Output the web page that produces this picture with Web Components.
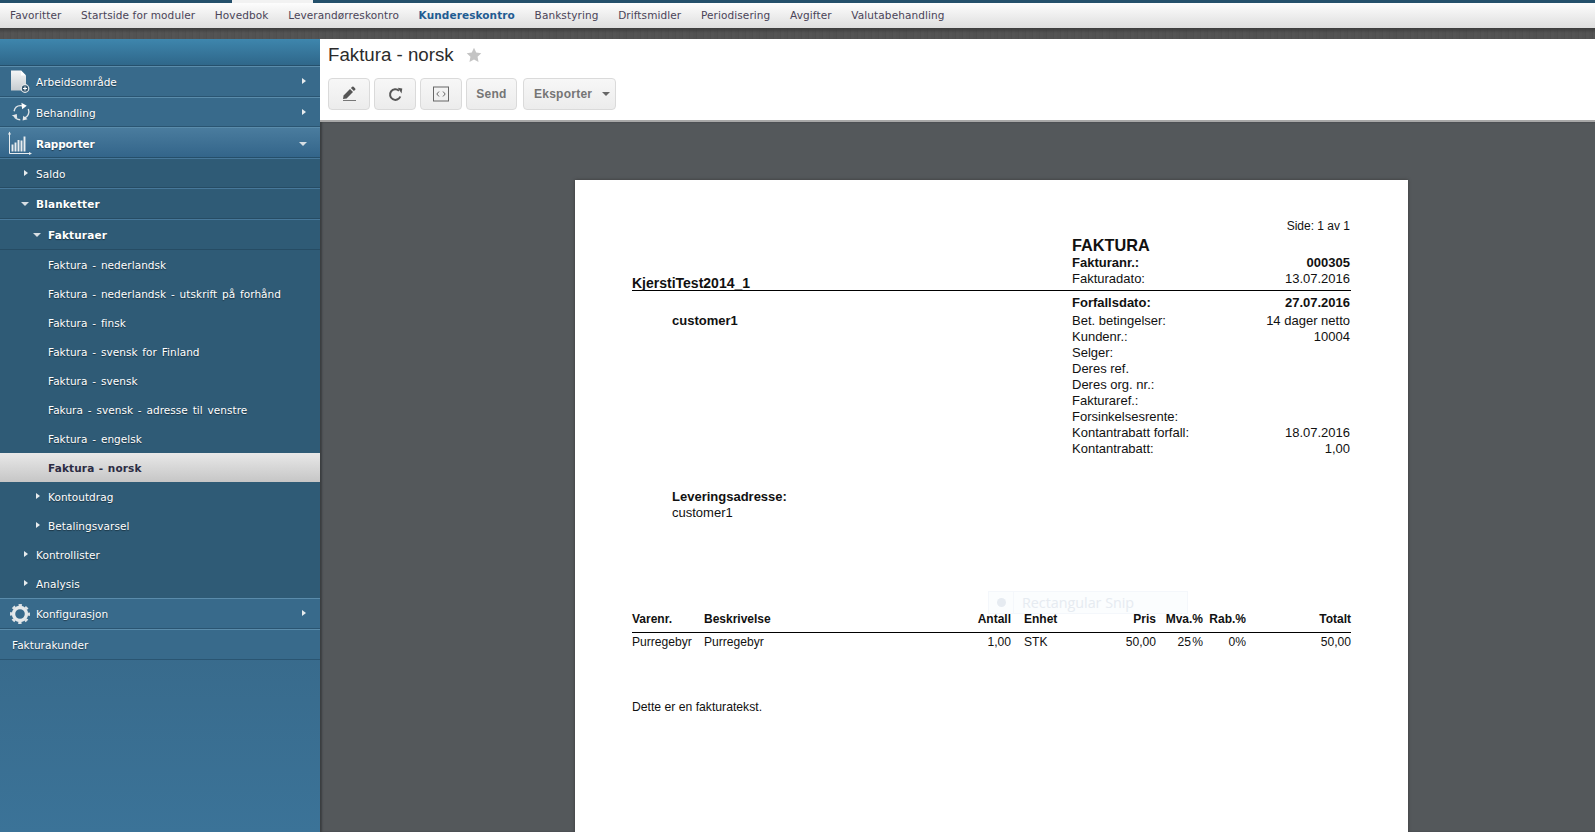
<!DOCTYPE html>
<html lang="no"><head><meta charset="utf-8"><title>Faktura - norsk</title>
<style>
html,body{margin:0;padding:0;height:100%;overflow:hidden;background:#54585b}
app-shell{font-family:"DejaVu Sans",sans-serif}
</style></head><body>
<app-shell>
  <top-menu slot="top">
    <menu-link>Favoritter</menu-link><menu-link>Startside for moduler</menu-link><menu-link>Hovedbok</menu-link><menu-link>Leverandørreskontro</menu-link><menu-link active>Kundereskontro</menu-link><menu-link>Bankstyring</menu-link><menu-link>Driftsmidler</menu-link><menu-link>Periodisering</menu-link><menu-link>Avgifter</menu-link><menu-link>Valutabehandling</menu-link>
  </top-menu>
  <side-nav slot="side">
    <nav-row kind="top" h="31" icon="doc" arrow="far-right" x="36">Arbeidsområde</nav-row>
    <nav-row kind="top" h="30" icon="cycle" arrow="far-right" x="36" dy="1">Behandling</nav-row>
    <nav-row kind="open" h="31" icon="chart" arrow="far-down" x="36" bold dy="1" style="--ls:-.15px">Rapporter</nav-row>
    <nav-row kind="sub" h="30" arrow="right" x="36" dy="1">Saldo</nav-row>
    <nav-row kind="sub" h="31" arrow="down" x="36" bold>Blanketter</nav-row>
    <nav-row kind="sub" h="31" arrow="down" x="48" bold>Fakturaer</nav-row>
    <nav-row kind="item" h="29" x="48">Faktura - nederlandsk</nav-row>
    <nav-row kind="item" h="29" x="48">Faktura - nederlandsk - utskrift på forhånd</nav-row>
    <nav-row kind="item" h="29" x="48">Faktura - finsk</nav-row>
    <nav-row kind="item" h="29" x="48">Faktura - svensk for Finland</nav-row>
    <nav-row kind="item" h="29" x="48">Faktura - svensk</nav-row>
    <nav-row kind="item" h="29" x="48">Fakura - svensk - adresse til venstre</nav-row>
    <nav-row kind="item" h="29" x="48">Faktura - engelsk</nav-row>
    <nav-row kind="active" h="29" x="48" bold>Faktura - norsk</nav-row>
    <nav-row kind="item" h="29" arrow="right" x="48">Kontoutdrag</nav-row>
    <nav-row kind="item" h="29" arrow="right" x="48">Betalingsvarsel</nav-row>
    <nav-row kind="item" h="29" arrow="right" x="36">Kontrollister</nav-row>
    <nav-row kind="item" h="29" arrow="right" x="36">Analysis</nav-row>
    <nav-row kind="top" h="31" icon="gear" arrow="far-right" x="36">Konfigurasjon</nav-row>
    <nav-row kind="top" h="31" x="12">Fakturakunder</nav-row>
  </side-nav>
  <tool-bar slot="tools" heading="Faktura - norsk">
    <tool-btn w="42" icon="pencil"></tool-btn>
    <tool-btn w="42" icon="refresh"></tool-btn>
    <tool-btn w="42" icon="code"></tool-btn>
    <tool-btn w="51">Send</tool-btn>
    <tool-btn w="93" caret style="margin-left:2px">Eksporter</tool-btn>
  </tool-bar>
  <report-page slot="main"></report-page>
</app-shell>
<script>
const svg = {
 doc:`<svg width="26" height="26" viewBox="0 0 26 26"><defs><linearGradient id="dg" x1="0" y1="0" x2="0" y2="1"><stop offset="0" stop-color="#f4f6f7"/><stop offset="1" stop-color="#c6ccd0"/></linearGradient></defs><path d="M3 1.500h10l5 5v15H3z" fill="url(#dg)"/><path d="M13 1.500l5 5h-5z" fill="#fff"/><circle cx="17" cy="19.500" r="3.800" fill="#33566e" stroke="#e6e9eb" stroke-width="1.200"/><path d="M15 19.500h4M17 17.500v4" stroke="#fff" stroke-width="1.100"/></svg>`,
 cycle:`<svg width="26" height="26" viewBox="0 0 26 26" fill="none" stroke="#dfe5e8" stroke-width="1.800"><g transform="translate(3 3) scale(.77)"><path d="M4 12C5 7 9 4 15 5"/><path d="M13.500 1l7 4-6 4.500z" fill="#fff" stroke="none"/><path d="M22.500 9c2 5-.5 10-5 12"/><path d="M21.500 22.500l-6.500 1.500 1-6z" fill="#e6e9eb" stroke="none"/><path d="M12 23C8 23 5 21 4 17"/><path d="M1 17.500l6.500-2 .5 5.500z" fill="#e6e9eb" stroke="none"/></g></svg>`,
 chart:`<svg width="24" height="26" viewBox="0 0 24 26" fill="none" stroke="#e8edf0"><path d="M1.500 2.500v21H23" stroke-width="1"/><path d="M0 4.500l1.500-3 1.500 3zM21 22l3 1.500-3 1.500z" fill="#e8edf0" stroke="none"/><path d="M4.500 21.500v-7M7.500 21.500v-9M10.500 21.500v-11.500M13.500 21.500v-11M16.500 21.500v-15" stroke-width="1.900"/></svg>`,
 gear:`<svg width="26" height="26" viewBox="0 0 26 26" fill="none"><circle cx="12" cy="13" r="6.500" stroke="#e4e8ea" stroke-width="3.400"/><circle cx="12" cy="13" r="8.800" stroke="#dfe3e6" stroke-width="2.400" stroke-dasharray="3.400 3.510" stroke-dashoffset="1.700"/></svg>`,
 pencil:`<svg width="16" height="16" viewBox="0 0 16 16"><path d="M2 13l.6-3.600L9 3l3 3-6.400 6.400z" fill="#555"/><path d="M9.900 2.100l1.300-1.300a1 1 0 011.400 0l1.600 1.600a1 1 0 010 1.400l-1.300 1.300z" fill="#555"/><path d="M2 14.500h13" stroke="#777" stroke-width="1"/></svg>`,
 refresh:`<svg width="15" height="15" viewBox="0 0 15 15" fill="none"><path d="M12.300 9.500A5.300 5.300 0 1111 3.700" stroke="#555" stroke-width="2"/><path d="M9.500 1h4.500v5z" fill="#555" transform="rotate(8 11 3)"/></svg>`,
 code:`<svg width="16" height="16" viewBox="0 0 16 16" fill="none" stroke="#666"><rect x=".5" y="1" width="15" height="14" stroke-width="1"/><path d="M6 5.500L3.800 8l2.200 2.500M10 5.500L12.200 8 10 10.500" stroke-width="1"/></svg>`
};
function def(name, html, extra){
  const t=document.createElement('template'); t.innerHTML=html;
  customElements.define(name, class extends HTMLElement{
    constructor(){super();this.attachShadow({mode:'open'}).appendChild(t.content.cloneNode(true));}
    connectedCallback(){extra&&extra.call(this,this.shadowRoot)}
  });
}
def('app-shell',`<style>
:host{display:grid;grid-template-columns:320px 1fr;grid-template-rows:28px 11px auto 1fr;width:1595px;height:832px;overflow:hidden;background:#54585b}
.top{grid-column:1/3}
.tex{grid-column:1/3;background:linear-gradient(#3c3c3c,rgba(76,76,76,0) 5px),repeating-linear-gradient(90deg,#525252 0 3px,#4f4f4f 3px 4px,#545454 4px 7px)}
.side{grid-row:3/5;grid-column:1;min-height:0}
.tools{grid-row:3;grid-column:2;position:relative;z-index:1}
.main{grid-row:4;grid-column:2;min-height:0;overflow:hidden}
</style>
<div class="top"><slot name="top"></slot></div><div class="tex"></div>
<div class="side"><slot name="side"></slot></div><div class="tools"><slot name="tools"></slot></div><div class="main"><slot name="main"></slot></div>`);
def('top-menu',`<style>
:host{display:block;height:28px}
.strip{height:3px;background:linear-gradient(90deg,#24506b 0 232px,#f2f2f2 232px 313px,#24506b 313px)}
.bar{height:25px;background:linear-gradient(#fdfdfd,#dedede);display:flex;align-items:center;padding:0 0 2px 10px;gap:19.700px;box-sizing:border-box}
</style><div class="strip"></div><div class="bar"><slot></slot></div>`);
def('menu-link',`<style>
:host{display:block;font:10.5px/14px "DejaVu Sans",sans-serif;color:#4a4458;white-space:nowrap;letter-spacing:.1px}
:host([active]){color:#1f5c92;font-weight:700}
</style><slot></slot>`);
def('side-nav',`<style>
:host{display:block;height:100%;background:linear-gradient(#386a8b 600px,#3b7398);position:relative}
.head{height:27px;box-sizing:border-box;background:linear-gradient(#3e86ad,#2f678a);border-bottom:1px solid #25506c}
</style><div class="head"></div><slot></slot>`);
def('nav-row',`<style>
:host{display:block}
.r{position:relative;display:flex;align-items:center;box-sizing:border-box;height:100%;color:#fff;font:10.5px/14px "DejaVu Sans",sans-serif;letter-spacing:.05px;word-spacing:1.4px;text-shadow:0 1px 1px rgba(0,0,0,.45);white-space:nowrap}
.r.top{background:#386a8b;border-top:1px solid #5a8cab;border-bottom:1px solid #2a5572}
.r.open{background:linear-gradient(#4a7c9e,#33658a);border-top:1px solid #5a8cab;border-bottom:1px solid #254f6a}
.r.sub{background:#2f5b76;border-top:1px solid #47789a;border-bottom:1px solid #264c64}
.r.item{background:#2f5b76}
.r.active{background:linear-gradient(#e8e8e8,#c6c6c6);color:#2c2c44;text-shadow:none}
.ico{position:absolute;left:8px;top:50%;transform:translateY(-50%);display:flex}
.a{position:absolute;width:0;height:0;top:50%}
.right{border-left:4px solid #e8ecee;border-top:3.500px solid transparent;border-bottom:3.500px solid transparent;margin-top:-4px}
.down{border-top:4px solid #d8dfe4;border-left:4px solid transparent;border-right:4px solid transparent;margin-top:-2px}
</style><div class="r"><span class="ico"></span><i class="a"></i><span class="t"><slot></slot></span></div>`,
function(s){
  const r=s.querySelector('.r'),k=this.getAttribute('kind'),x=+this.getAttribute('x'),a=this.getAttribute('arrow');
  const dy=+(this.getAttribute('dy')||0);
  this.style.height=this.getAttribute('h')+'px';
  r.classList.add(k); r.style.paddingLeft=x+'px';
  if(dy) s.querySelector('.t').style.paddingTop=(2*dy)+'px';
  if(this.hasAttribute('bold')){r.style.fontWeight='700';r.style.letterSpacing='var(--ls,.15px)';r.style.wordSpacing='.6px'}
  const ic=this.getAttribute('icon'); s.querySelector('.ico').innerHTML=ic?svg[ic]:'';
  const i=s.querySelector('.a');
  if(!a) i.remove(); else {
    if(dy) i.style.top='calc(50% + '+dy+'px)';
    if(a==='far-right'){i.classList.add('right');i.style.left='302px'}
    if(a==='far-down'){i.classList.add('down');i.style.left='299px'}
    if(a==='right'){i.classList.add('right');i.style.left=(x-12)+'px'}
    if(a==='down'){i.classList.add('down');i.style.left=(x-15)+'px'}
  }
});
def('tool-bar',`<style>
:host{display:block;background:#fff;height:83px;box-sizing:border-box;border-bottom:2px solid #a8a8a8;padding:0 0 0 8px}
.h{height:32px;margin-bottom:7px;display:flex;align-items:center;gap:12px;font:18.700px/24px "Liberation Sans",sans-serif;color:#2b2b2b}
.s{display:flex;gap:4px}
</style><div class="h"><span id="t"></span><svg width="16" height="16" viewBox="0 0 18 18"><path d="M9 .8l2.500 5.400 5.700.7-4.200 4 1.100 5.900L9 14l-5.100 2.800L5 10.900.8 6.900l5.700-.7z" fill="#c4c4c4"/></svg></div><div class="s"><slot></slot></div>`,
function(s){s.getElementById('t').textContent=this.getAttribute('heading')});
def('tool-btn',`<style>
:host{display:block}
.b{height:32px;box-sizing:border-box;border:1px solid #dadada;border-radius:4px;background:linear-gradient(#f7f7f7,#ececec);display:flex;align-items:center;justify-content:center;gap:10px;font:700 12px "Liberation Sans",sans-serif;color:#757575;letter-spacing:.25px}
.b.car{justify-content:flex-start;padding-left:10px}
.i{display:flex}
.c{border-top:4px solid #666;border-left:4px solid transparent;border-right:4px solid transparent}
</style><div class="b"><span class="i"></span><slot></slot></div>`,
function(s){const b=s.querySelector('.b');b.style.width=this.getAttribute('w')+'px';
 const ic=this.getAttribute('icon'); s.querySelector('.i').innerHTML=ic?svg[ic]:'';
 if(!ic) s.querySelector('.i').remove();
 if(this.hasAttribute('caret')){b.classList.add('car');const c=document.createElement('span');c.className='c';b.appendChild(c)}});
def('report-page',`<style>
:host{display:block;height:100%;box-sizing:border-box;padding:58px 187px 0 255px;font:13px/16px "Liberation Sans",sans-serif;color:#111;box-shadow:inset 2px 0 2px #3a3e40}
.p{position:relative;background:#fff;height:800px;box-sizing:border-box;padding:38px 57px 0;box-shadow:0 0 3px #3a3a3a}
.side{text-align:right;padding-right:1px;font-size:12px}
.hd{display:grid;grid-template-columns:440px 1fr;height:53px}
.kj{align-self:end;font:700 14px/16px "Liberation Sans",sans-serif;margin-bottom:-4px}
.f{font:700 16.300px/20px "Liberation Sans",sans-serif;height:20px;margin-top:1px}
.l{display:flex;justify-content:space-between;height:16px;padding-right:1px}
.b{font-weight:700}
.rule{border-top:1px solid #000;margin:3px 0 4px}
.bd{display:grid;grid-template-columns:440px 1fr}
.cust{padding:18px 0 0 40px}
.ship{padding:160px 0 0 40px}
.g1{margin-top:2px}
.tbl{display:grid;grid-template-columns:72px 232px 75px 13px 76px 56px 47px 43px 105px;margin-top:90px;font-size:12.100px}
.tbl>*{height:16px;white-space:nowrap}
.th{font-weight:700;font-size:12px;height:21px!important;border-bottom:1px solid #000;margin-bottom:1px}
.n{text-align:right}
.pc{word-spacing:-2px}
.txt{margin-top:49px;font-size:12.200px}
.ghost{position:absolute;left:413px;top:411px;width:200px;height:23px;box-sizing:border-box;border:1px solid #f4f7fb;display:flex;align-items:center;background:rgba(246,249,253,.4);font:14.300px "Open Sans",sans-serif;color:#e6ebf1}
.ghost i{width:24px;height:100%;border-right:1px solid #f4f7fb;position:relative;margin-right:8px}
.ghost i:after{content:"";position:absolute;left:8px;top:6px;width:9px;height:9px;border-radius:50%;background:#e6ebf1}
</style>
<div class="p">
<div class="side">Side: 1 av 1</div>
<div class="hd"><div class="kj">KjerstiTest2014_1</div><div>
<div class="f">FAKTURA</div>
<div class="l b"><span>Fakturanr.:</span><span>000305</span></div>
<div class="l"><span>Fakturadato:</span><span>13.07.2016</span></div></div></div>
<div class="rule"></div>
<div class="bd"><div>
<div class="b cust">customer1</div>
<div class="ship"><div class="b">Leveringsadresse:</div><div>customer1</div></div>
</div><div>
<div class="l b"><span>Forfallsdato:</span><span>27.07.2016</span></div>
<div class="g1"></div>
<div class="l"><span>Bet. betingelser:</span><span>14 dager netto</span></div>
<div class="l"><span>Kundenr.:</span><span>10004</span></div>
<div class="l"><span>Selger:</span></div>
<div class="l"><span>Deres ref.</span></div>
<div class="l"><span>Deres org. nr.:</span></div>
<div class="l"><span>Fakturaref.:</span></div>
<div class="l"><span>Forsinkelsesrente:</span></div>
<div class="l"><span>Kontantrabatt forfall:</span><span>18.07.2016</span></div>
<div class="l"><span>Kontantrabatt:</span><span>1,00</span></div>
</div></div>
<div class="tbl">
<div class="th">Varenr.</div><div class="th">Beskrivelse</div><div class="th n">Antall</div><div class="th"></div><div class="th">Enhet</div><div class="th n">Pris</div><div class="th n">Mva.%</div><div class="th n">Rab.%</div><div class="th n">Totalt</div>
<div>Purregebyr</div><div>Purregebyr</div><div class="n">1,00</div><div></div><div>STK</div><div class="n">50,00</div><div class="n pc">25 %</div><div class="n">0%</div><div class="n">50,00</div>
</div>
<div class="txt">Dette er en fakturatekst.</div>
<div class="ghost"><i></i>Rectangular Snip</div>
</div>`);
</script>
</body></html>
